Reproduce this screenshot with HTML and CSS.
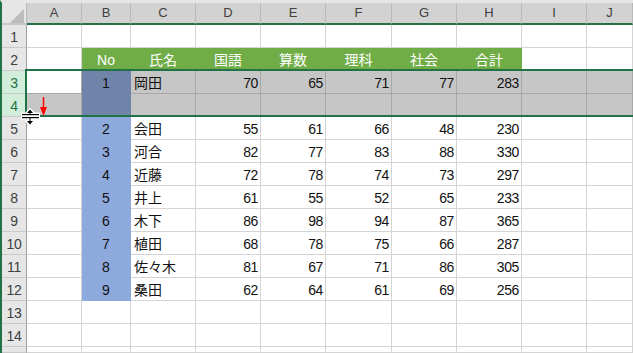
FILE: index.html
```html
<!DOCTYPE html>
<html lang="ja">
<head>
  <meta charset="UTF-8" />
  <title>行の移動</title>
  <link rel="stylesheet" href="styles.css">
</head>
<body>
  <div class="sheet">
    <div class="grid">
      <!-- 列見出し -->
      <div class="corner"></div>
      <div class="ch">A</div><div class="ch">B</div><div class="ch">C</div><div class="ch">D</div><div class="ch">E</div>
      <div class="ch">F</div><div class="ch">G</div><div class="ch">H</div><div class="ch">I</div><div class="ch">J</div>

      <!-- 1 -->
      <div class="rh">1</div>
      <div class="c"></div><div class="c"></div><div class="c"></div><div class="c"></div><div class="c"></div>
      <div class="c"></div><div class="c"></div><div class="c"></div><div class="c"></div><div class="c"></div>

      <!-- 2 見出し -->
      <div class="rh">2</div>
      <div class="c"></div>
      <div class="c hd">No</div><div class="c hd">氏名</div><div class="c hd">国語</div><div class="c hd">算数</div>
      <div class="c hd">理科</div><div class="c hd">社会</div><div class="c hd">合計</div>
      <div class="c"></div><div class="c"></div>

      <!-- 3 選択中 -->
      <div class="rh on">3</div>
      <div class="c act"></div>
      <div class="c selb mid">1</div>
      <div class="c sel txt">岡田</div>
      <div class="c sel num">70</div><div class="c sel num">65</div><div class="c sel num">71</div>
      <div class="c sel num">77</div><div class="c sel num">283</div>
      <div class="c sel"></div><div class="c sel"></div>

      <!-- 4 選択中 -->
      <div class="rh on">4</div>
      <div class="c sel"></div>
      <div class="c selb"></div>
      <div class="c sel"></div><div class="c sel"></div><div class="c sel"></div><div class="c sel"></div>
      <div class="c sel"></div><div class="c sel"></div><div class="c sel"></div><div class="c sel"></div>

      <!-- 5 -->
      <div class="rh">5</div>
      <div class="c"></div><div class="c blue mid">2</div><div class="c txt">会田</div>
      <div class="c num">55</div><div class="c num">61</div><div class="c num">66</div><div class="c num">48</div><div class="c num">230</div>
      <div class="c"></div><div class="c"></div>

      <!-- 6 -->
      <div class="rh">6</div>
      <div class="c"></div><div class="c blue mid">3</div><div class="c txt">河合</div>
      <div class="c num">82</div><div class="c num">77</div><div class="c num">83</div><div class="c num">88</div><div class="c num">330</div>
      <div class="c"></div><div class="c"></div>

      <!-- 7 -->
      <div class="rh">7</div>
      <div class="c"></div><div class="c blue mid">4</div><div class="c txt">近藤</div>
      <div class="c num">72</div><div class="c num">78</div><div class="c num">74</div><div class="c num">73</div><div class="c num">297</div>
      <div class="c"></div><div class="c"></div>

      <!-- 8 -->
      <div class="rh">8</div>
      <div class="c"></div><div class="c blue mid">5</div><div class="c txt">井上</div>
      <div class="c num">61</div><div class="c num">55</div><div class="c num">52</div><div class="c num">65</div><div class="c num">233</div>
      <div class="c"></div><div class="c"></div>

      <!-- 9 -->
      <div class="rh">9</div>
      <div class="c"></div><div class="c blue mid">6</div><div class="c txt">木下</div>
      <div class="c num">86</div><div class="c num">98</div><div class="c num">94</div><div class="c num">87</div><div class="c num">365</div>
      <div class="c"></div><div class="c"></div>

      <!-- 10 -->
      <div class="rh">10</div>
      <div class="c"></div><div class="c blue mid">7</div><div class="c txt">植田</div>
      <div class="c num">68</div><div class="c num">78</div><div class="c num">75</div><div class="c num">66</div><div class="c num">287</div>
      <div class="c"></div><div class="c"></div>

      <!-- 11 -->
      <div class="rh">11</div>
      <div class="c"></div><div class="c blue mid">8</div><div class="c txt">佐々木</div>
      <div class="c num">81</div><div class="c num">67</div><div class="c num">71</div><div class="c num">86</div><div class="c num">305</div>
      <div class="c"></div><div class="c"></div>

      <!-- 12 -->
      <div class="rh">12</div>
      <div class="c"></div><div class="c blue mid">9</div><div class="c txt">桑田</div>
      <div class="c num">62</div><div class="c num">64</div><div class="c num">61</div><div class="c num">69</div><div class="c num">256</div>
      <div class="c"></div><div class="c"></div>

      <!-- 13 -->
      <div class="rh">13</div>
      <div class="c"></div><div class="c"></div><div class="c"></div><div class="c"></div><div class="c"></div>
      <div class="c"></div><div class="c"></div><div class="c"></div><div class="c"></div><div class="c"></div>

      <!-- 14 -->
      <div class="rh">14</div>
      <div class="c"></div><div class="c"></div><div class="c"></div><div class="c"></div><div class="c"></div>
      <div class="c"></div><div class="c"></div><div class="c"></div><div class="c"></div><div class="c"></div>

      <!-- 15 (見切れ) -->
      <div class="rh last"></div>
      <div class="c last"></div><div class="c last"></div><div class="c last"></div><div class="c last"></div><div class="c last"></div>
      <div class="c last"></div><div class="c last"></div><div class="c last"></div><div class="c last"></div><div class="c last"></div>
    </div>

    <!-- 選択範囲の枠 -->
    <div class="selbox"></div>

    <!-- 赤い矢印 -->
    <svg class="arrow" width="10" height="21" viewBox="39 96 10 21">
      <line x1="43.5" y1="97" x2="43.5" y2="109" stroke="#ff0000" stroke-width="1.5" />
      <polygon points="40,107 47,107 43.5,116" fill="#ff0000" />
    </svg>

    <!-- 行高さ変更カーソル -->
    <svg class="cursor" width="20" height="21" viewBox="21 107 20 21">
      <g fill="#fff" stroke="#fff" stroke-width="2" stroke-linejoin="round">
        <polygon points="30,109 26.5,113 33.5,113" />
        <rect x="22" y="113.5" width="17" height="5" />
        <polygon points="26.5,121 33.5,121 30,125" />
        <rect x="29.5" y="112" width="1" height="10" />
      </g>
      <g fill="#000">
        <polygon points="30,109.5 27,113 33,113" />
        <rect x="29.5" y="113" width="1" height="1" />
        <rect x="22" y="114" width="17" height="1.2" />
        <rect x="22" y="117" width="17" height="1.2" />
        <rect x="29.5" y="118" width="1" height="3" />
        <polygon points="27,121 33,121 30,124.5" />
      </g>
    </svg>
  </div>
</body>
</html>
```

FILE: styles.css
```css
* {
  margin: 0;
  padding: 0;
  box-sizing: border-box;
}

body {
  width: 633px;
  height: 353px;
  overflow: hidden;
  background: #fff;
  font-family: "Liberation Sans", "Noto Sans CJK JP", sans-serif;
  font-size: 14px;
  color: #111;
}

.sheet {
  position: relative;
  height: 353px;
  overflow: hidden;
  border-left: 2px solid #217346;
  border-top: 3px solid #e6e6e6;
}

.grid {
  display: grid;
  grid-template-columns: 25px 55px 49px 65px 65px 65px 66px 65px 65px 65px 46px;
  grid-template-rows: 22px;
  grid-auto-rows: 23px;
}

/* 見出し */
.corner {
  position: relative;
  background: #e6e6e6;
  border-right: 1px solid #b9b9b9;
  border-bottom: 2px solid #c8c8c8;
}

.corner::after {
  content: "";
  position: absolute;
  right: 2px;
  bottom: 0;
  border-left: 14px solid transparent;
  border-bottom: 14px solid #bcbcbc;
}

.ch {
  background: #d2d2d2;
  border-right: 1px solid #b9b9b9;
  border-bottom: 2px solid #217346;
  text-align: center;
  font-size: 13px;
  line-height: 20px;
  color: #404040;
}

.rh {
  background: #e6e6e6;
  border-right: 1px solid #9e9e9e;
  border-bottom: 1px solid #c9c9c9;
  text-align: center;
  line-height: 24px;
  color: #404040;
  letter-spacing: -0.3px;
}

.rh.on {
  background: #d3eddb;
  color: #217346;
}

/* セル */
.c {
  border-right: 1px solid #d4d4d4;
  border-bottom: 1px solid #d4d4d4;
  line-height: 24px;
  padding: 0 2px;
  white-space: nowrap;
}

.last {
  height: 6px;
}

.num {
  text-align: right;
  letter-spacing: -0.4px;
}

.mid {
  text-align: center;
}

.txt {
  padding-left: 3px;
}

.hd {
  background: #70ad47;
  border-color: #70ad47;
  color: #fff;
  text-align: center;
}

.blue {
  background: #8ea9db;
  border-color: #8ea9db;
}

.sel {
  background: #c6c6c6;
  border-color: #a8a8a8;
}

.selb {
  background: #7084aa;
  border-color: #7084aa;
}

.act {
  background: #fff;
  border-color: #a8a8a8;
}

/* 重ねて描くもの */
.selbox {
  position: absolute;
  left: 23px;
  right: 0;
  top: 66px;
  height: 48px;
  border: 2px solid #217346;
  border-right: none;
}

.arrow {
  position: absolute;
  left: 37px;
  top: 93px;
}

.cursor {
  position: absolute;
  left: 19px;
  top: 104px;
}
```
